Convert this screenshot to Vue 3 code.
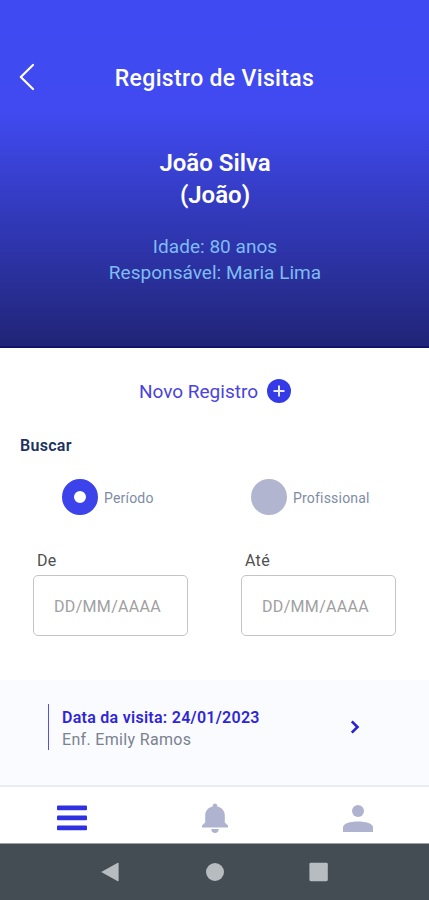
<script setup>
import { reactive } from 'vue';

const paciente = {
    nome: 'João Silva',
    apelido: 'João',
    idade: 80,
    responsavel: 'Maria Lima',
};

const busca = reactive({
    filtro: 'periodo',
    de: '',
    ate: '',
});

const visitas = [
    { id: 1, data: '24/01/2023', profissional: 'Enf. Emily Ramos' },
];
</script>

<template>
    <div class="tela">
        <header class="cabecalho">
            <div class="topo">
                <svg class="voltar" width="18" height="30" viewBox="0 0 18 30">
                    <path d="M15 3 L2.8 15 L15 27" />
                </svg>
                <h1 class="titulo">Registro de Visitas</h1>
            </div>
            <h2 class="nome">{{ paciente.nome }}<br />({{ paciente.apelido }})</h2>
            <p class="dados idade">Idade: {{ paciente.idade }} anos</p>
            <p class="dados responsavel">Responsável: {{ paciente.responsavel }}</p>
        </header>

        <main class="conteudo">
            <div class="novo">
                <span class="novo-texto">Novo Registro</span>
                <svg width="24" height="24" viewBox="0 0 24 24">
                    <circle cx="12" cy="12" r="12" fill="#343be6" />
                    <path d="M12 6.5 V17.5 M6.5 12 H17.5" stroke="#e9eaff" stroke-width="2" />
                </svg>
            </div>

            <h3 class="buscar">Buscar</h3>

            <div class="filtros">
                <label class="opcao">
                    <input v-model="busca.filtro" class="radio" type="radio" value="periodo" />
                    <span class="opcao-texto">Período</span>
                </label>
                <label class="opcao">
                    <input v-model="busca.filtro" class="radio" type="radio" value="profissional" />
                    <span class="opcao-texto">Profissional</span>
                </label>
            </div>

            <div class="datas">
                <label class="campo">
                    <span class="rotulo">De</span>
                    <input v-model="busca.de" class="data" type="text" placeholder="DD/MM/AAAA" />
                </label>
                <label class="campo">
                    <span class="rotulo">Até</span>
                    <input v-model="busca.ate" class="data" type="text" placeholder="DD/MM/AAAA" />
                </label>
            </div>
        </main>

        <section class="lista">
            <div v-for="visita in visitas" :key="visita.id" class="visita">
                <div class="visita-info">
                    <p class="visita-data">Data da visita: {{ visita.data }}</p>
                    <p class="visita-profissional">{{ visita.profissional }}</p>
                </div>
                <svg class="seta" width="10" height="16" viewBox="0 0 10 16">
                    <path d="M1.8 2.3 L7.5 8 L1.8 13.7" />
                </svg>
            </div>
        </section>

        <nav class="menu">
            <svg width="32" height="32" viewBox="0 0 32 32" fill="#2f30df">
                <rect x="1" y="3.5" width="30" height="4.8" rx="1" />
                <rect x="1" y="13.5" width="30" height="4.8" rx="1" />
                <rect x="1" y="23.5" width="30" height="4.8" rx="1" />
            </svg>
            <svg width="32" height="32" viewBox="0 0 32 32" fill="#afb3cf">
                <path d="M16 1.5 C17.5 1.5 18.3 2.7 18.3 4.5 C23 5.5 25.8 9 25.8 13.5 V20.5 L29 23.5 V25.5 H3 V23.5 L6.2 20.5 V13.5 C6.2 9 9 5.5 13.7 4.5 C13.7 2.7 14.5 1.5 16 1.5 Z" />
                <path d="M12.2 27 H19.8 C19.6 29.6 18.2 31 16 31 C13.8 31 12.4 29.6 12.2 27 Z" />
            </svg>
            <svg width="32" height="32" viewBox="0 0 32 32" fill="#afb3cf">
                <circle cx="16" cy="9" r="6" />
                <path d="M1 30 V25.5 C1 21.5 8 19.5 16 19.5 C24 19.5 31 21.5 31 25.5 V30 Z" />
            </svg>
        </nav>

        <footer class="sistema">
            <svg width="20" height="20" viewBox="0 0 20 20">
                <path d="M0.2 10 L16.8 0.8 Q17.6 0.6 17.6 1.4 V18.6 Q17.6 19.4 16.8 19.2 Z" />
            </svg>
            <svg width="20" height="20" viewBox="0 0 20 20">
                <circle cx="10" cy="10" r="9" />
            </svg>
            <svg width="20" height="20" viewBox="0 0 20 20">
                <rect x="0.4" y="0.8" width="18.4" height="18.4" rx="1.4" />
            </svg>
        </footer>
    </div>
</template>

<style>
body {
    margin: 0;
}
</style>

<style scoped>
* {
    margin: 0;
    padding: 0;
    box-sizing: border-box;
    font-family: Roboto, 'Liberation Sans', sans-serif;
}

svg {
    display: block;
    flex-shrink: 0;
}

.tela {
    display: flex;
    flex-direction: column;
    height: 900px;
    background-color: #fff;
    overflow: hidden;
}

.cabecalho {
    height: 348px;
    padding-top: 56px;
    text-align: center;
    color: #fff;
    background: linear-gradient(#404af2 0, #404af0 112px, #212579 342px);
    border-bottom: 2px solid #15126c;
}

.topo {
    display: grid;
    grid-template-columns: 40px 1fr 40px;
    align-items: center;
    height: 43px;
}

.voltar {
    margin: 0 0 2px 18px;
    fill: none;
    stroke: #fff;
    stroke-width: 2.2;
    stroke-linecap: round;
    stroke-linejoin: round;
}

.titulo {
    padding-top: 3px;
    font-size: 23px;
    font-weight: 500;
    line-height: 40px;
    letter-spacing: 0.33px;
}

.nome {
    margin-top: 48px;
    padding-left: 1px;
    font-size: 24px;
    font-weight: 600;
    line-height: 32px;
}

.dados {
    padding-left: 1px;
    font-size: 19px;
    line-height: 26px;
    letter-spacing: 0.03px;
    color: #7ebcf5;
}

.idade {
    margin-top: 23px;
}

.novo {
    display: flex;
    align-items: center;
    justify-content: center;
    gap: 9px;
    height: 24px;
    margin-top: 31px;
    padding-left: 1px;
}

.novo-texto {
    font-size: 19px;
    color: #4a43dc;
}

.buscar {
    margin: 31px 0 0 20px;
    font-size: 16px;
    font-weight: 600;
    line-height: 24px;
    letter-spacing: 0.3px;
    color: #1c3160;
}

.filtros {
    display: grid;
    grid-template-columns: 189px 1fr;
    margin: 21px 0 0 62px;
}

.opcao {
    display: flex;
    align-items: center;
    gap: 6px;
}

.radio {
    width: 36px;
    height: 36px;
    border-radius: 50%;
    background-color: #b1b5cf;
    appearance: none;
}

.radio:checked {
    border: 12px solid #3c43ea;
    background-color: #fff;
}

.opcao-texto {
    padding-top: 2px;
    font-size: 14px;
    letter-spacing: 0.2px;
    color: #7d8ca6;
}

.datas {
    display: flex;
    gap: 53px;
    margin: 34px 33px 0;
}

.campo {
    flex: 1;
}

.rotulo {
    display: block;
    height: 26px;
    padding-left: 4px;
    font-size: 16px;
    line-height: 24px;
    letter-spacing: 0.3px;
    color: #4f4f52;
}

.data {
    display: block;
    width: 100%;
    height: 61px;
    padding: 2px 0 0 20px;
    border: 1.5px solid #c4c4c4;
    border-radius: 5px;
    font-size: 16px;
    letter-spacing: 0.32px;
    color: #4f4f52;
    outline: none;
}

.data::placeholder {
    color: #a0a0a0;
}

.lista {
    height: 105px;
    margin-top: 44px;
    padding: 24px 69px 0 48px;
    background-color: #f9fbff;
}

.visita {
    display: flex;
    align-items: center;
    justify-content: space-between;
}

.visita-info {
    height: 46px;
    padding: 2px 0 0 13px;
    border-left: 1px solid #5a4fdb;
}

.visita-data {
    font-size: 16px;
    font-weight: 600;
    line-height: 23px;
    letter-spacing: 0.27px;
    color: #2f25d8;
}

.visita-profissional {
    font-size: 16px;
    line-height: 22px;
    letter-spacing: 0.33px;
    color: #7a828f;
}

.seta {
    fill: none;
    stroke: #2a20d5;
    stroke-width: 2.6;
}

.menu {
    display: grid;
    grid-template-columns: repeat(3, 1fr);
    place-items: center;
    height: 58px;
    padding-top: 6px;
    border-top: 2px solid #ebecef;
}

.sistema {
    display: flex;
    justify-content: center;
    gap: 84px;
    flex: 1;
    padding-top: 18px;
    background-color: #444d54;
    border-top: 1px solid #9ba0a3;
    fill: #b7bcc0;
}
</style>
